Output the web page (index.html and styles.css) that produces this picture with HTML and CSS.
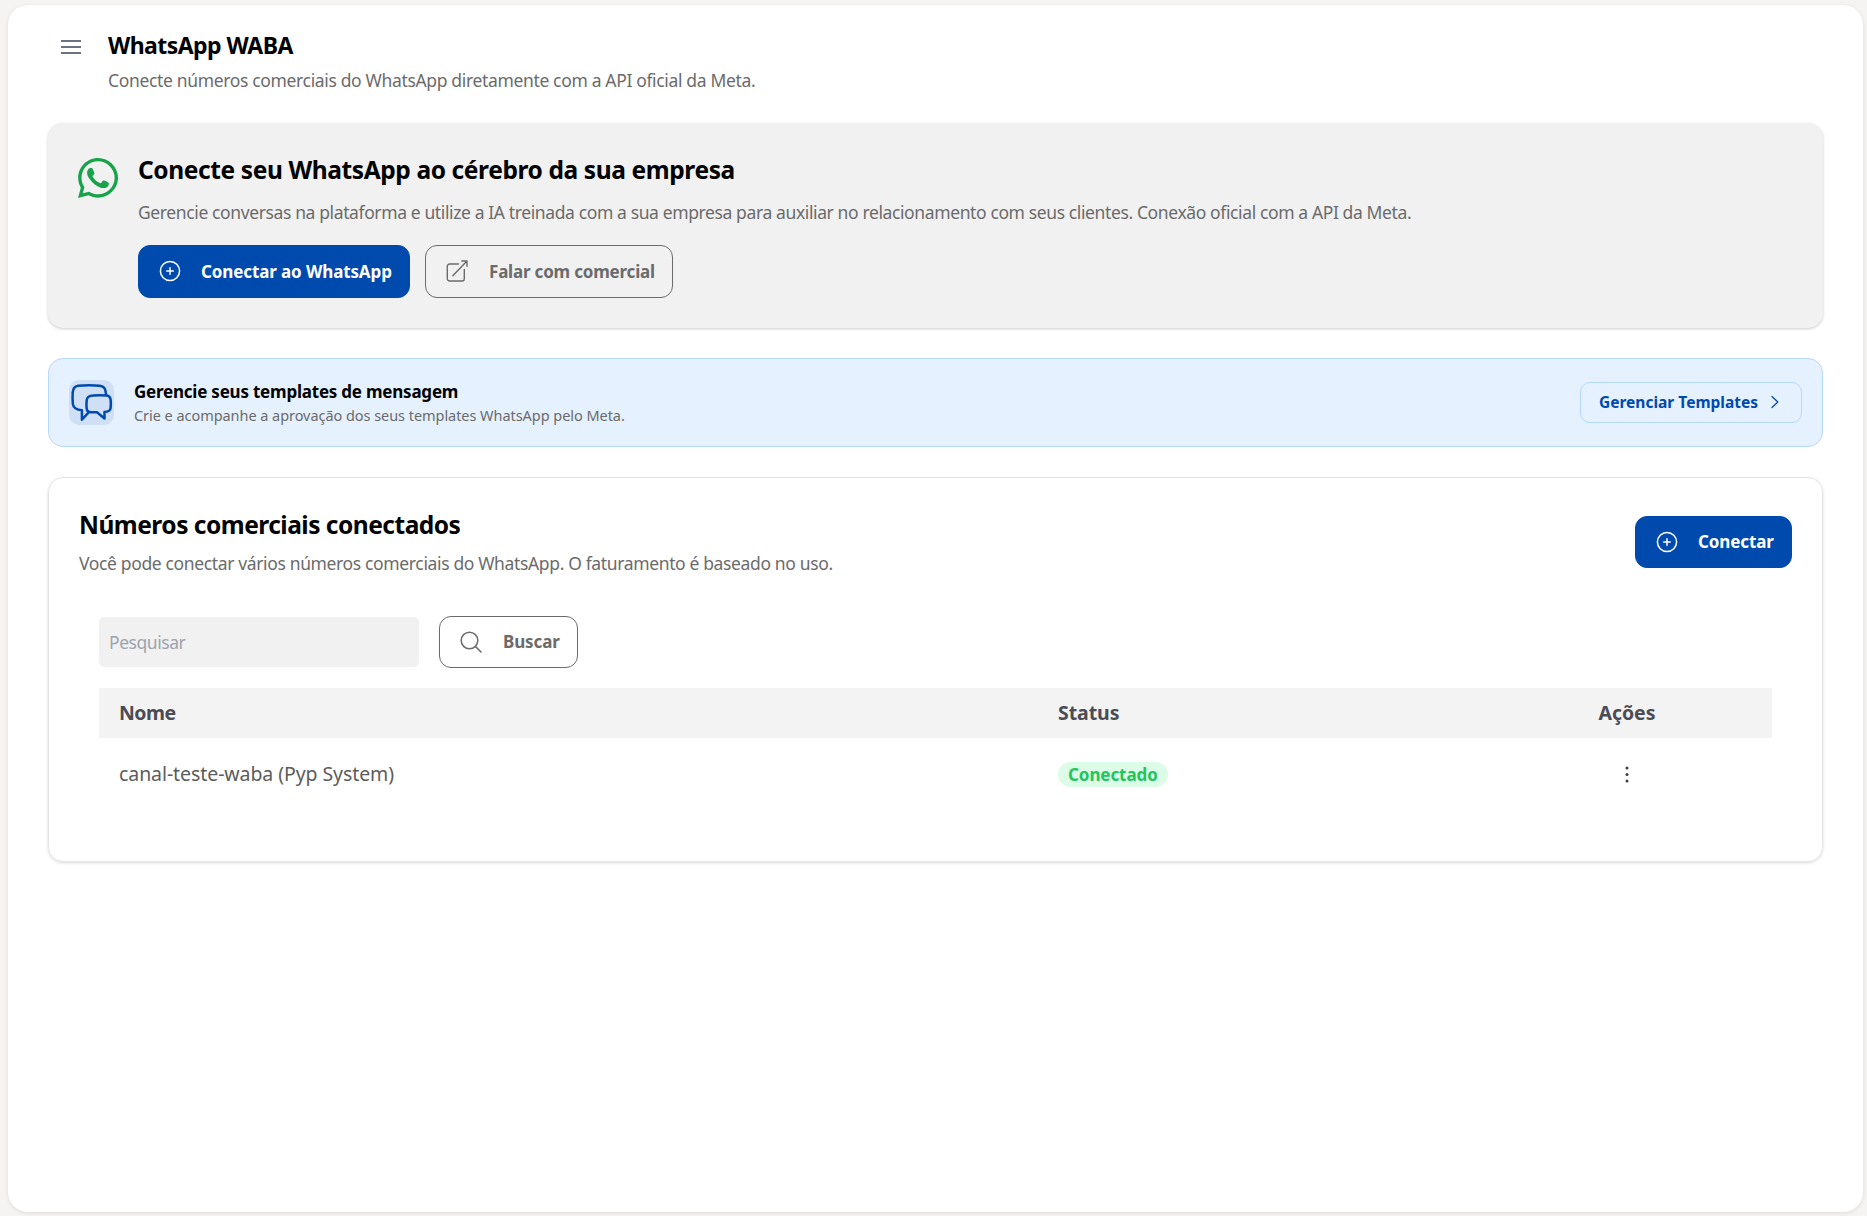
FILE: index.html
```html
<!DOCTYPE html>
<html lang="pt-BR">
<head>
  <meta charset="UTF-8">
  <meta name="viewport" content="width=device-width, initial-scale=1.0">
  <title>WhatsApp WABA</title>
  <link rel="stylesheet" href="styles.css">
</head>
<body>

<main class="panel">
  <header class="page-header">
    <svg class="menu-icon" viewBox="0 0 20 14" fill="none" stroke="#6b7280" stroke-width="1.8">
      <path d="M0 1h20M0 7h20M0 13h20"/>
    </svg>
    <div>
      <h1>WhatsApp WABA</h1>
      <p class="text page-subtitle">Conecte números comerciais do WhatsApp diretamente com a API oficial da Meta.</p>
    </div>
  </header>

  <section class="hero">
    <svg class="whatsapp-icon" viewBox="0 0 448 448" fill="#16a34a">
      <path d="M380.9 65.1C339 23.1 283.2 0 223.900 0 101.500 0 1.900 99.600 1.900 222c0 39.100 10.200 77.300 29.600 111L0 448l117.700-30.900c32.400 17.700 68.900 27 106.100 27h.1c122.300 0 224.100-99.600 224.100-222 0-59.300-25.200-115-67.100-157zM223.900 406.700c-33.200 0-65.700-8.900-94-25.700l-6.700-4L53.400 395.300 72 327.200l-4.400-7c-18.500-29.400-28.200-63.300-28.200-98.200 0-101.700 82.800-184.500 184.600-184.500 49.300 0 95.600 19.200 130.400 54.100 34.800 34.900 56.200 81.200 56.100 130.500 0 101.800-84.900 184.600-186.600 184.600z"/>
      <path transform="translate(-18 -18) scale(1.08)" d="M325.100 268.500c-5.500-2.800-32.800-16.200-37.900-18-5.100-1.900-8.800-2.800-12.500 2.800-3.700 5.600-14.300 18-17.600 21.800-3.200 3.700-6.500 4.200-12 1.400-32.600-16.300-54-29.100-75.500-66-5.700-9.800 5.700-9.100 16.300-30.300 1.800-3.700.9-6.900-.5-9.700-1.400-2.800-12.500-30.100-17.100-41.200-4.500-10.800-9.100-9.300-12.500-9.500-3.200-.2-6.900-.2-10.600-.2-3.700 0-9.700 1.400-14.800 6.900-5.100 5.600-19.400 19-19.400 46.300 0 27.300 19.900 53.700 22.600 57.400 2.800 3.700 39.100 59.700 94.800 83.800 35.200 15.200 49 16.500 66.600 13.900 10.700-1.600 32.800-13.400 37.400-26.400 4.600-13 4.600-24.100 3.200-26.400-1.300-2.500-5-3.900-10.500-6.600z"/>
    </svg>
    <div class="hero-body">
      <h2 class="hero-title">Conecte seu WhatsApp ao cérebro da sua empresa</h2>
      <p class="text hero-text">Gerencie conversas na plataforma e utilize a IA treinada com a sua empresa para auxiliar no relacionamento com seus clientes. Conexão oficial com a API da Meta.</p>
      <div class="hero-actions">
        <button class="btn btn-primary btn-whatsapp">
          <svg viewBox="0 0 22 22" fill="none" stroke="currentColor" stroke-width="1.5" stroke-linecap="round">
            <circle cx="11" cy="11" r="9.6"/>
            <path d="M11 7.700v6.600M7.700 11h6.600"/>
          </svg>
          Conectar ao WhatsApp
        </button>
        <button class="btn btn-outline btn-sales">
          <svg viewBox="0 0 22 22" fill="none" stroke="currentColor" stroke-width="1.4" stroke-linecap="round" stroke-linejoin="round">
            <path d="M12.5 4H3.500a2.200 2.200 0 0 0-2.200 2.200v12.600A2.200 2.200 0 0 0 3.500 21h12.600a2.200 2.200 0 0 0 2.200-2.200V9.500M6.800 15.700 21 1M15.800 1H21v5.200"/>
          </svg>
          Falar com comercial
        </button>
      </div>
    </div>
  </section>

  <section class="templates">
    <div class="templates-icon">
      <svg viewBox="0 0 45 45" fill="none" stroke="#004aad" stroke-width="2.5" stroke-linecap="round" stroke-linejoin="round">
        <path d="M37 14.300C36.500 8.300 35.300 6.500 30.800 5.800 24 5 16 5 9 5.800 4.800 6.500 3.900 8.900 3.700 12.700c-.3 4-.2 7.500.2 11.500.5 4 3 5.600 9 6v9.500l7-7.500"/>
        <path d="M24 15.600c5-.5 9-.5 13.500 0 3 .4 4 2 4.200 4.700.3 3.500.2 5.200-.1 7.900-.3 2.600-2 3.700-6.100 3.900V38.500l-7.500-6.200H22c-3 0-4.200-1.800-4.400-4.200-.3-3-.2-5.200.1-7.900.3-2.900 2.300-4.300 6.300-4.600z"/>
      </svg>
    </div>
    <div class="templates-body">
      <h3>Gerencie seus templates de mensagem</h3>
      <p>Crie e acompanhe a aprovação dos seus templates WhatsApp pelo Meta.</p>
    </div>
    <button class="btn-templates">
      Gerenciar Templates
      <svg viewBox="0 0 8 14" fill="none" stroke="currentColor" stroke-width="1.3" stroke-linecap="round" stroke-linejoin="round">
        <path d="M1 1.500 6.800 7 1 12.500"/>
      </svg>
    </button>
  </section>

  <section class="numbers">
    <div class="numbers-header">
      <div>
        <h2 class="numbers-title">Números comerciais conectados</h2>
        <p class="text numbers-text">Você pode conectar vários números comerciais do WhatsApp. O faturamento é baseado no uso.</p>
      </div>
      <button class="btn btn-primary btn-connect">
        <svg viewBox="0 0 22 22" fill="none" stroke="currentColor" stroke-width="1.5" stroke-linecap="round">
          <circle cx="11" cy="11" r="9.6"/>
          <path d="M11 7.700v6.600M7.700 11h6.600"/>
        </svg>
        Conectar
      </button>
    </div>

    <div class="search">
      <input type="text" class="search-input" placeholder="Pesquisar">
      <button class="btn btn-outline btn-search">
        <svg viewBox="0 0 22 22" fill="none" stroke="currentColor" stroke-width="1.5" stroke-linecap="round">
          <circle cx="9.500" cy="9.500" r="8.300"/>
          <path d="m15.600 15.600 5.400 5.400"/>
        </svg>
        Buscar
      </button>
    </div>

    <div class="table">
      <div class="row row-head">
        <div class="col-name">Nome</div>
        <div>Status</div>
        <div class="actions">Ações</div>
      </div>
      <div class="row">
        <div>canal-teste-waba (Pyp System)</div>
        <div><span class="badge">Conectado</span></div>
        <div class="actions">
          <svg class="dots" viewBox="0 0 4 17" fill="#3f3f46">
            <circle cx="2" cy="2" r="1.500"/>
            <circle cx="2" cy="8.500" r="1.500"/>
            <circle cx="2" cy="15" r="1.500"/>
          </svg>
        </div>
      </div>
    </div>
  </section>
</main>

</body>
</html>
```
FILE: styles.css
```css
* {
  box-sizing: border-box;
}

body {
  margin: 0;
  padding: 5px 4px 4px 8px;
  height: 100vh;
  background-color: #f5f4f3;
  font-family: "Noto Sans", sans-serif;
  color: #000;
  overflow: hidden;
}

h1, h2, h3, p {
  margin: 0;
  white-space: nowrap;
}

button {
  font-family: inherit;
  cursor: pointer;
  white-space: nowrap;
}

svg {
  display: block;
  flex-shrink: 0;
}

.panel {
  height: 100%;
  padding: 21px 40px;
  background-color: #fff;
  border-radius: 20px;
  box-shadow: 0 1px 4px rgba(0, 0, 0, 0.1);
}

.page-header {
  display: flex;
  gap: 27px;
  height: 97px;
  padding-left: 13px;
}

.menu-icon {
  width: 20px;
  height: 14px;
  margin-top: 14px;
}

h1 {
  font-size: 23px;
  line-height: 38px;
  letter-spacing: -0.55px;
}

h2 {
  font-size: 24.5px;
  line-height: 34px;
}

.text {
  font-size: 17.5px;
  line-height: 32px;
  letter-spacing: -0.36px;
  color: #6b6b6b;
}

.page-subtitle {
  letter-spacing: -0.345px;
}

.hero {
  display: flex;
  gap: 20px;
  height: 205px;
  padding: 30px;
  background-color: #f1f1f1;
  border-radius: 15px;
  box-shadow: 0 1px 3px rgba(0, 0, 0, 0.2);
}

.whatsapp-icon {
  width: 40px;
  height: 40px;
  margin-top: 5px;
}

.hero-title {
  letter-spacing: -0.39px;
}

.hero-text {
  margin-top: 9px;
  letter-spacing: -0.383px;
}

.hero-actions {
  display: flex;
  gap: 15px;
  margin-top: 17px;
}

.btn {
  display: flex;
  align-items: center;
  height: 52px;
  padding: 0 0 1px 20px;
  gap: 20px;
  border: 1px solid #6b6b6b;
  border-radius: 12px;
  font-size: 17px;
  font-weight: bold;
  letter-spacing: -0.12px;
}

.btn svg {
  width: 22px;
  height: 22px;
}

.btn-primary {
  background-color: #004aad;
  border-color: #004aad;
  color: #fff;
}

.btn-outline {
  background-color: transparent;
  color: #6b6b6b;
  gap: 21px;
}

.btn-whatsapp {
  width: 272px;
  height: 53px;
}

.btn-sales {
  width: 248px;
  height: 53px;
  letter-spacing: -0.2px;
}

.templates {
  display: flex;
  align-items: center;
  height: 89px;
  margin-top: 30px;
  padding: 0 20px 1px;
  background-color: #e5f1ff;
  border: 1px solid #b5d8fd;
  border-radius: 15px;
}

.templates-icon {
  width: 45px;
  height: 45px;
  background-color: #cfe0f6;
  border-radius: 10px;
}

.templates-body {
  flex: 1;
  margin-left: 20px;
}

.templates-body h3 {
  padding-top: 2px;
  font-size: 17px;
  line-height: 24px;
  letter-spacing: -0.22px;
}

.templates-body p {
  font-size: 14.5px;
  line-height: 23px;
  letter-spacing: -0.05px;
  color: #6b6b6b;
}

.btn-templates {
  display: flex;
  align-items: center;
  gap: 13px;
  width: 222px;
  height: 41px;
  padding: 0 0 0 18px;
  background-color: transparent;
  border: 1px solid #b5d8fd;
  border-radius: 10px;
  color: #004aad;
  font-size: 15.5px;
  font-weight: bold;
}

.btn-templates svg {
  width: 8px;
  height: 14px;
}

.numbers {
  height: 385px;
  margin-top: 30px;
  padding: 30px;
  border: 1px solid #e5e5e5;
  border-radius: 15px;
  box-shadow: 0 1px 3px rgba(0, 0, 0, 0.15);
}

.numbers-header {
  display: flex;
  justify-content: space-between;
  height: 72px;
}

.numbers-title {
  letter-spacing: -0.5px;
}

.numbers-text {
  margin-top: 5px;
}

.btn-connect {
  width: 157px;
  margin-top: 8px;
}

.search {
  display: flex;
  align-items: center;
  gap: 20px;
  margin: 36px 0 0 20px;
}

.search-input {
  width: 320px;
  height: 50px;
  padding: 0 10px;
  background-color: #f1f1f1;
  border: none;
  border-radius: 5px;
  font-family: inherit;
  font-size: 17.5px;
  letter-spacing: -0.45px;
}

.search-input::placeholder {
  color: #9ca3af;
}

.btn-search {
  width: 139px;
}

.table {
  margin: 20px 20px 0;
}

.row {
  display: grid;
  grid-template-columns: 939px 424px 1fr;
  align-items: center;
  height: 71px;
  padding-left: 20px;
  font-size: 19.5px;
  letter-spacing: -0.08px;
  color: #5c5c5c;
}

.row-head {
  height: 50px;
  padding-bottom: 2px;
  background-color: #f3f3f3;
  color: #4b4b55;
  font-weight: bold;
}

.col-name {
  letter-spacing: -0.5px;
}

.actions {
  display: flex;
  justify-content: center;
}

.badge {
  display: block;
  width: 110px;
  height: 25px;
  margin-top: 1px;
  padding-left: 10px;
  background-color: #dcfce7;
  border-radius: 13px;
  color: #22c55e;
  font-size: 17px;
  font-weight: bold;
  line-height: 25px;
}

.dots {
  width: 4px;
  height: 17px;
  margin-top: 1px;
}
```
